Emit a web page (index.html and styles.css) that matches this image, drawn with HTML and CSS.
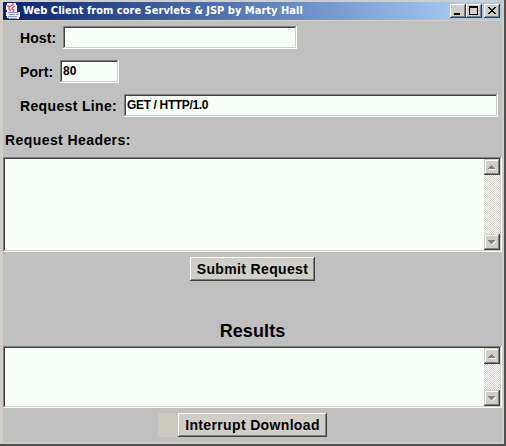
FILE: index.html
```html
<!DOCTYPE html>
<html lang="en">
<head>
<meta charset="utf-8">
<title>Web Client</title>
<link rel="stylesheet" href="styles.css">
</head>
<body>
<div class="window">
  <header class="titlebar">
    <svg class="logo" width="16" height="16" viewBox="0 0 16 16" shape-rendering="crispEdges">
      <path fill="#f4eef8" d="M2 0h9v2h1v7h3v5h-1v2H4v-1H2v-2H1V9h1V7H1V2h1z"/>
      <path fill="none" stroke="#e0455c" stroke-width="1.2" shape-rendering="auto" d="M8 0v2L4 4v2l2 2M10 3L7 5v1l2 1-1 2M3 2v2"/>
      <path fill="none" stroke="#8a94c4" shape-rendering="auto" d="M3 9.500h8M4 11.500h6M3 13.500h9M11 9.500h2v2h-2M5 15.500h7"/>
    </svg>
    <span class="title">Web Client from core Servlets &amp; JSP by Marty Hall</span>
    <div class="controls">
      <span class="ctl"><svg width="16" height="14" shape-rendering="crispEdges"><path d="M4 9h6v2H4z"/></svg></span>
      <span class="ctl"><svg width="16" height="14" shape-rendering="crispEdges"><path fill-rule="evenodd" d="M3 2h9v9H3zM4 4v6h7V4z"/></svg></span>
      <span class="ctl close"><svg width="16" height="14" shape-rendering="crispEdges"><path d="M4 3h2v1h1v1h2V4h1V3h2v1h-1v1h-1v1H9v1h1v1h1v1h1v1h-2V9H9V8H7v1H6v1H4V9h1V8h1V7h1V6H6V5H5V4H4z"/></svg></span>
    </div>
  </header>
  <main class="content">
    <div class="row"><span class="label host">Host:</span><span class="field host-field"></span></div>
    <div class="row"><span class="label port">Port:</span><span class="field port-field">80</span></div>
    <div class="row"><span class="label line">Request Line:</span><span class="field line-field">GET / HTTP/1.0</span></div>
    <div class="headers-label"><span class="label">Request Headers:</span></div>
    <div class="area headers">
      <div class="scroll">
        <span class="arrow"><svg width="16" height="16" shape-rendering="crispEdges"><path fill="#fff" d="M5 10h7v1H5z"/><path fill="#808080" d="M7 6h1v1h1v1h1v1h1v1H4V9h1V8h1V7h1z"/></svg></span>
        <span class="arrow"><svg width="16" height="16" shape-rendering="crispEdges"><path fill="#fff" d="M11 7h1v1h-1v1h-1v1H9v1H8v-1h1V9h1V8h1z"/><path fill="#808080" d="M4 6h7v1h-1v1H9v1H8v1H7V9H6V8H5V7H4z"/></svg></span>
      </div>
    </div>
    <div class="submit-row"><span class="button submit">Submit Request</span></div>
    <h1 class="results-title">Results</h1>
    <div class="area results">
      <div class="scroll">
        <span class="arrow"><svg width="16" height="16" shape-rendering="crispEdges"><path fill="#fff" d="M5 10h7v1H5z"/><path fill="#808080" d="M7 6h1v1h1v1h1v1h1v1H4V9h1V8h1V7h1z"/></svg></span>
        <span class="arrow"><svg width="16" height="16" shape-rendering="crispEdges"><path fill="#fff" d="M11 7h1v1h-1v1h-1v1H9v1H8v-1h1V9h1V8h1z"/><path fill="#808080" d="M4 6h7v1h-1v1H9v1H8v1H7V9H6V8H5V7H4z"/></svg></span>
      </div>
    </div>
    <div class="interrupt-row"><span class="spacer"></span><span class="button interrupt">Interrupt Download</span></div>
  </main>
</div>
</body>
</html>
```

FILE: styles.css
```css
* { box-sizing: border-box; }
body { margin: 0; overflow: hidden; font-family: "Liberation Sans", Arial, sans-serif; font-weight: bold; color: #000; }
svg { display: block; }
.window {
  width: 506px; height: 446px;
  display: flex; flex-direction: column;
  background: #d0cec6;
  padding: 2px 2px 2px 3px;
  border-right: 2px solid #505050;
  border-bottom: 2px solid #505050;
}
.titlebar {
  height: 18px; flex: none;
  display: flex; align-items: center;
  padding: 0 2px;
  background: linear-gradient(to right, #0a246a, #6f93cb 62%, #a6caf0 92%);
}
.title {
  margin-left: 2px;
  font: bold 11px/18px "DejaVu Sans Condensed", "DejaVu Sans", sans-serif;
  letter-spacing: 0.02px; white-space: nowrap; color: #fff;
}
.controls { display: flex; margin-left: auto; }
.ctl {
  width: 16px; height: 14px; background: #d0cec6;
  box-shadow: inset -1px -1px #404040, inset 1px 1px #fff, inset -2px -2px #808080;
}
.close { margin-left: 2px; }
.content {
  flex: 1; margin-top: 1px;
  display: flex; flex-direction: column;
  background: #c0c0c0;
  padding-top: 5px;
  width: 499px;
}
.row { display: flex; height: 23px; margin-bottom: 11px; padding-left: 17px; }
.label { font-size: 14px; line-height: 24px; letter-spacing: 0.42px; white-space: nowrap; }
.host { width: 43px; letter-spacing: 0.1px; }
.port { width: 40px; letter-spacing: 0.1px; }
.line { width: 104px; letter-spacing: 0.35px; }
.field {
  height: 23px; background: #f8fef8; padding-left: 3px;
  font-size: 12px; line-height: 22px; letter-spacing: -0.35px; white-space: nowrap;
  box-shadow: inset -1px -1px #fff, inset 1px 1px #808080, inset -2px -2px #d0cec6, inset 2px 2px #404040;
}
.host-field { width: 234px; }
.port-field { width: 59px; letter-spacing: 0; }
.line-field { width: 374px; }
.headers-label { height: 29px; padding-left: 2px; }
.area {
  display: flex; justify-content: flex-end; flex: none;
  padding: 2px; background: #f8fef8;
  box-shadow: inset -1px -1px #fff, inset 1px 1px #808080, inset -2px -2px #d0cec6, inset 2px 2px #404040;
}
.headers { height: 95px; }
.results { height: 62px; }
.scroll {
  width: 16px; display: flex; flex-direction: column; justify-content: space-between;
  background: repeating-conic-gradient(#d0cec6 0 25%, #fff 0 50%) 0 0 / 2px 2px;
}
.arrow {
  width: 16px; height: 16px; background: #d0cec6;
  box-shadow: inset -1px -1px #404040, inset 1px 1px #d0cec6, inset -2px -2px #808080, inset 2px 2px #fff;
}
.button {
  height: 24px; background: #d0cec6; text-align: center;
  font-size: 14px; line-height: 24px; letter-spacing: 0.35px; white-space: nowrap;
  box-shadow: inset -1px -1px #404040, inset 1px 1px #fff, inset -2px -2px #808080;
}
.submit-row { display: flex; height: 68px; padding: 5px 0 0 187px; }
.submit { width: 125px; }
.results-title { margin: 0; height: 26px; font-size: 18px; line-height: 22px; text-align: center; letter-spacing: 0.1px; }
.interrupt-row { display: flex; padding: 5px 0 0 155px; }
.spacer { width: 20px; height: 24px; background: #ccc9c1; }
.interrupt { width: 149px; }
```
